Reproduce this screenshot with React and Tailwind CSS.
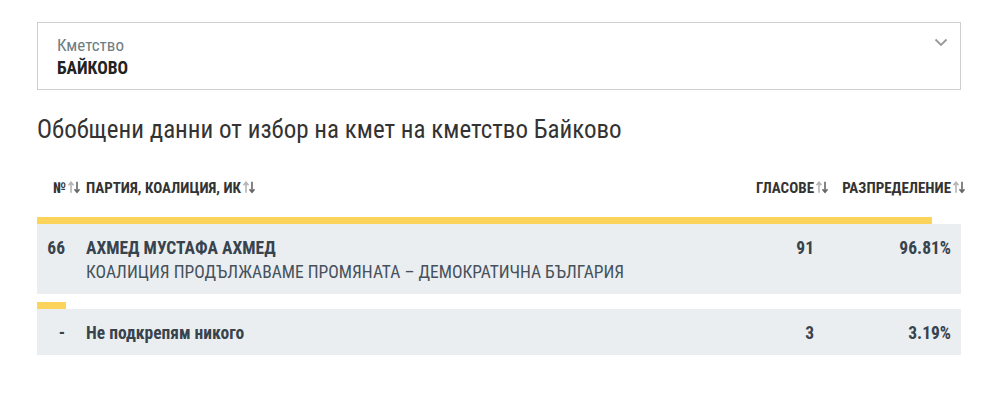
import React from "react";

const F = { fontFamily: "'Roboto Condensed', 'Liberation Sans Narrow', 'DejaVu Sans Condensed', Roboto, sans-serif" };

function Sort() {
  return (
    <svg width="14" height="13" viewBox="0 0 14 13" className="absolute left-full top-1/2 -translate-y-[55%] ml-[1px]">
      <path d="M4 12V2M1.5 4.5L4 1.5 6.5 4.5" stroke="#b5b5b5" strokeWidth="1.6" fill="none" />
      <path d="M10 1v10M7.5 8.5L10 11.5 12.5 8.5" stroke="#666" strokeWidth="1.6" fill="none" />
    </svg>
  );
}

const rows = [
  { n: "66", name: "АХМЕД МУСТАФА АХМЕД", sub: "КОАЛИЦИЯ ПРОДЪЛЖАВАМЕ ПРОМЯНАТА – ДЕМОКРАТИЧНА БЪЛГАРИЯ", votes: "91", pct: 96.81 },
  { n: "-", name: "Не подкрепям никого", sub: null, votes: "3", pct: 3.19 },
];

export default function App() {
  return (
    <div className="w-[998px] h-[413px] bg-white px-[37px] pt-[22px]" style={F}>
      <div className="relative h-[68px] border border-[#cfcfcf] pl-[19px] pt-[11px]">
        <div className="text-[17px] leading-[22px] text-[#6f7d82]">Кметство</div>
        <div className="text-[17.5px] leading-[24px] font-bold text-[#222]">БАЙКОВО</div>
        <svg width="14" height="9" viewBox="0 0 14 9" className="absolute right-[12px] top-[15px]">
          <path d="M1.5 1.5L7 7l5.5-5.5" stroke="#999" strokeWidth="1.8" fill="none" />
        </svg>
      </div>
      <h2 className="mt-[24px] text-[25px] leading-[32px] text-[#333]">Обобщени данни от избор на кмет на кметство Байково</h2>
      <div className="mt-[31px] flex items-center h-[22px] text-[15px] font-bold text-[#333]">
        <div className="w-[29px] flex justify-end"><span className="relative">№<Sort /></span></div>
        <div className="flex-1 pl-[20px]"><span className="relative">ПАРТИЯ, КОАЛИЦИЯ, ИК<Sort /></span></div>
        <div className="w-[120px] flex justify-end"><span className="relative">ГЛАСОВЕ<Sort /></span></div>
        <div className="w-[147px] pr-[10px] flex justify-end"><span className="relative">РАЗПРЕДЕЛЕНИЕ<Sort /></span></div>
      </div>
      <div className="mt-[18px] flex flex-col gap-[8px]">
        {rows.map((r, i) => (
          <div key={i}>
            <div className="h-[7px] bg-[#fcd35b]" style={{ width: r.pct + "%" }} />
            <div className={"flex bg-[#ebeef1] text-[#37434d] " + (r.sub ? "h-[70px] pt-[13px]" : "h-[46px] items-center pt-[3px]")}>
              <div className="w-[28px] text-right text-[17.5px] font-bold leading-[23px]">{r.n}</div>
              <div className="flex-1 pl-[21px]">
                <div className="text-[17.5px] font-bold leading-[23px]">{r.name}</div>
                {r.sub && <div className="text-[17.5px] leading-[25px] text-[#45515b]">{r.sub}</div>}
              </div>
              <div className="w-[120px] text-right text-[17.5px] font-bold leading-[23px]">{r.votes}</div>
              <div className="w-[147px] pr-[10px] text-right text-[17.5px] font-bold leading-[23px]">{r.pct.toFixed(2)}%</div>
            </div>
          </div>
        ))}
      </div>
    </div>
  );
}
